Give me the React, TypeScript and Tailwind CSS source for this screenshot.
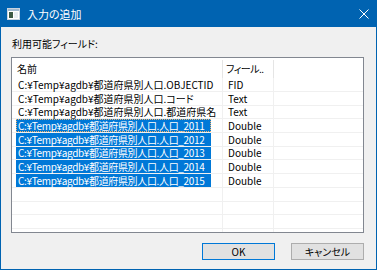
import React from 'react';

const rows = [
  { name: 'C:¥Temp¥agdb¥都道府県別人口.OBJECTID', type: 'FID', sel: false, h: 'h-[14px]' },
  { name: 'C:¥Temp¥agdb¥都道府県別人口.コード', type: 'Text', sel: false, h: 'h-[14px]' },
  { name: 'C:¥Temp¥agdb¥都道府県別人口.都道府県名', type: 'Text', sel: false, h: 'h-[13px]' },
  { name: 'C:¥Temp¥agdb¥都道府県別人口.人口_2011', type: 'Double', sel: true, h: 'h-[14px]', focus: true },
  { name: 'C:¥Temp¥agdb¥都道府県別人口.人口_2012', type: 'Double', sel: true, h: 'h-[14px]' },
  { name: 'C:¥Temp¥agdb¥都道府県別人口.人口_2013', type: 'Double', sel: true, h: 'h-[13px]' },
  { name: 'C:¥Temp¥agdb¥都道府県別人口.人口_2014', type: 'Double', sel: true, h: 'h-[14px]' },
  { name: 'C:¥Temp¥agdb¥都道府県別人口.人口_2015', type: 'Double', sel: true, h: 'h-[14px]' },
  { name: '', type: '', sel: false, h: 'h-[14px]' },
  { name: '', type: '', sel: false, h: 'h-[13px]' },
  { name: '', type: '', sel: false, h: 'h-[14px]' },
  { name: '', type: '', sel: false, h: 'h-[14px]' },
];

function AppIcon() {
  return (
    <svg width="13" height="12" viewBox="0 0 13 12">
      <rect x="0.5" y="0.5" width="12" height="11" fill="#ffffff" stroke="#c8d4e0" />
      <rect x="1" y="1" width="11" height="2" fill="#9fb8d0" />
      <rect x="2" y="4" width="4" height="6" fill="#3c5a46" />
      <rect x="7" y="4" width="4" height="6" fill="#e8eef4" />
    </svg>
  );
}

export default function App() {
  return (
    <div className="w-[377px] h-[270px] flex flex-col bg-[#0063b1] px-px pb-px font-['Noto_Sans_CJK_JP',sans-serif] text-[10px] leading-[14px] text-black [font-feature-settings:'palt']">
      <div className="h-[27px] shrink-0 flex items-center pl-[6px] pr-[7px] text-white">
        <AppIcon />
        <span className="ml-[7px] text-[11px]">入力の追加</span>
        <svg className="ml-auto" width="10" height="10" viewBox="0 0 10 10">
          <path d="M0.5 0.5 L9.5 9.5 M9.5 0.5 L0.5 9.5" stroke="#ffffff" strokeWidth="1" />
        </svg>
      </div>

      <div className="flex-1 bg-[#f0f0f0] pl-[10px] pr-[12px] pt-[10px] flex flex-col">
        <div className="pl-[1px] h-[14px]">利用可能フィールド:</div>

        <div className="mt-[6px] h-[176px] border border-[#828790] bg-white overflow-hidden">
          <div className="h-[20px] flex items-center pt-[2px]">
            <div className="w-[210px] pl-[5px]">名前</div>
            <div className="w-px h-full bg-[#e5e5e5]" />
            <div className="w-[50px] pl-[3px] tracking-[-0.5px]">フィール..</div>
            <div className="w-px h-full bg-[#e5e5e5]" />
          </div>
          {rows.map((r, i) => (
            <div key={i} className={`${r.h} flex leading-[12px] border-b border-[#f0f0f0]`}>
              <div className="w-[210px] pl-[4px] flex items-stretch">
                {r.name && (
                  <div
                    className={
                      r.sel
                        ? `w-[195px] bg-[#0078d7] text-white pl-[2px] tracking-[-0.35px] flex items-center whitespace-nowrap ${r.focus ? 'outline-1 outline-dotted outline-[#f2b36b] -outline-offset-1' : ''}`
                        : 'pl-[2px] flex items-center whitespace-nowrap'
                    }
                  >
                    {r.name}
                  </div>
                )}
              </div>
              <div className="w-px bg-[#f0f0f0]" />
              <div className="w-[50px] pl-[5px] flex items-center">{r.type}</div>
              <div className="w-px bg-[#f0f0f0]" />
            </div>
          ))}
        </div>

        <div className="mt-[10px] flex justify-end gap-[16px]">
          <button className="w-[73px] h-[17px] bg-[#e1e1e1] border border-[#0078d7] flex items-center justify-center">
            OK
          </button>
          <button className="w-[73px] h-[17px] bg-[#e1e1e1] border border-[#adadad] flex items-center justify-center">
            キャンセル
          </button>
        </div>
      </div>
    </div>
  );
}
